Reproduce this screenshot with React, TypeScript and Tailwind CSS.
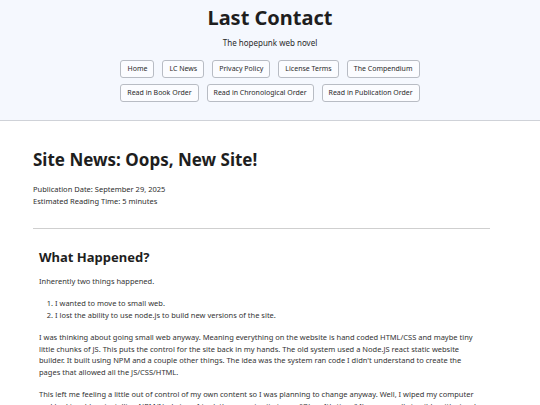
const navTop = ['Home', 'LC News', 'Privacy Policy', 'License Terms', 'The Compendium']
const navBottom = ['Read in Book Order', 'Read in Chronological Order', 'Read in Publication Order']

const NavButton = ({ label }: { label: string }) => (
  <a className="block rounded-[3px] border border-[#b8bcc4] bg-[#fbfcff] px-[6px] py-[3px] text-[7px] leading-[10px] text-[#2a2a2a]">
    {label}
  </a>
)

export default function App() {
  return (
    <div className="min-h-screen bg-white text-[#222] [font-family:'Noto_Sans',sans-serif]">
      <header className="border-b border-[#cfd2d8] bg-[#f5f8fe] pb-[18px] pt-[4px] text-center">
        <h1 className="text-[20px] font-bold leading-[28px] text-[#1e1e1e]">Last Contact</h1>
        <p className="mt-[5px] text-[8px] leading-[11px] text-[#2a2a2a]">The hopepunk web novel</p>
        <nav className="mt-[12px] flex flex-col items-center gap-[6px]">
          <div className="flex gap-[8px]">
            {navTop.map(item => (
              <NavButton key={item} label={item} />
            ))}
          </div>
          <div className="flex gap-[8px]">
            {navBottom.map(item => (
              <NavButton key={item} label={item} />
            ))}
          </div>
        </nav>
      </header>

      <main className="ml-[33px] w-[457px] pt-[28px]">
        <h1 className="text-[17px] font-bold leading-[22px] text-[#1e1e1e]">Site News: Oops, New Site!</h1>
        <div className="mt-[13px] text-[7.5px] leading-[11.5px] text-[#2e2e2e]">
          <p>Publication Date: September 29, 2025</p>
          <p>Estimated Reading Time: 5 minutes</p>
        </div>
        <hr className="mt-[21px] border-t border-[#cfcfcf]" />

        {/* Article body */}
        <article className="px-[6px] pt-[19px] text-[7.5px] leading-[11.5px] text-[#333]">
          <h2 className="text-[13px] font-bold leading-[18px] text-[#1e1e1e]">What Happened?</h2>
          <p className="mt-[10px]">Inherently two things happened.</p>
          <ol className="mt-[10.5px] list-decimal pl-[16px]">
            <li>I wanted to move to small web.</li>
            <li>I lost the ability to use node.js to build new versions of the site.</li>
          </ol>
          <p className="mt-[11px]">
            I was thinking about going small web anyway. Meaning everything on the website is hand coded HTML/CSS and maybe tiny
            little chunks of JS. This puts the control for the site back in my hands. The old system used a Node.JS react static
            website builder. It built using NPM and a couple other things. The idea was the system ran code I didn't understand to
            create the pages that allowed all the JS/CSS/HTML.
          </p>
          <p className="mt-[11px]">
            This left me feeling a little out of control of my own content so I was planning to change anyway. Well, I wiped my
            computer and had trouble reinstalling NPM/Node.js so I took the opportunity to say "Okay. It's time." I'm personally
            terrible with visual design so I kept it simple.
          </p>
        </article>
      </main>
    </div>
  )
}
